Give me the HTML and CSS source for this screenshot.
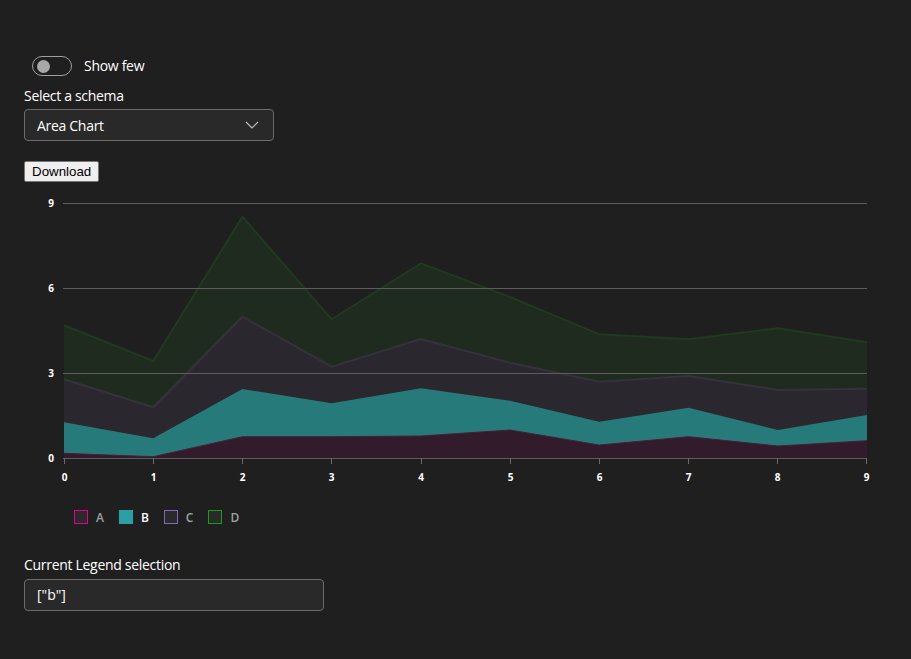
FILE: index.html
```html
<!DOCTYPE html>
<html>
<head>
<meta charset="utf-8">
<link rel="stylesheet" href="styles.css">
</head>
<body>
<div class="page">
  <div class="toggle-row">
    <span class="toggle"><span class="knob"></span></span>
    <span class="toggle-label">Show few</span>
  </div>
  <div class="field-label">Select a schema</div>
  <div class="dropdown">
    <span>Area Chart</span>
    <svg class="chev" width="14" height="8" viewBox="0 0 14 8"><path d="M1 1 L7 7 L13 1" fill="none" stroke="#bdbdbd" stroke-width="1.2"/></svg>
  </div>
  <button class="download">Download</button>
  <svg class="chart" width="870" height="292" viewBox="0 0 870 292">
    <g transform="translate(-24,-192)">
      <polygon class="d" points="64,458 64,325.3 153.2,361 242.4,216.7 331.7,319.3 420.9,263.3 510.1,297 599.3,334.3 688.6,339.3 777.8,328.3 867,342.3 867,458"/>
      <polyline class="d-line" points="64,325.3 153.2,361 242.4,216.7 331.7,319.3 420.9,263.3 510.1,297 599.3,334.3 688.6,339.3 777.8,328.3 867,342.3"/>
      <polygon class="c" points="64,458 64,379.3 153.2,407.3 242.4,316.7 331.7,366.7 420.9,339 510.1,362.7 599.3,381.7 688.6,376 777.8,390 867,388.7 867,458"/>
      <polyline class="c-line" points="64,379.3 153.2,407.3 242.4,316.7 331.7,366.7 420.9,339 510.1,362.7 599.3,381.7 688.6,376 777.8,390 867,388.7"/>
      <polygon class="b" points="64,458 64,422.3 153.2,438.3 242.4,389 331.7,403.3 420.9,388.3 510.1,400.7 599.3,421.7 688.6,407.7 777.8,430 867,415 867,458"/>
      <polygon class="a" points="64,458 64,453.3 153.2,456.7 242.4,436.7 331.7,436.7 420.9,436 510.1,430 599.3,445 688.6,436.7 777.8,446 867,440.7 867,458"/>
      <polyline class="a-line" points="64,453.3 153.2,456.7 242.4,436.7 331.7,436.7 420.9,436 510.1,430 599.3,445 688.6,436.7 777.8,446 867,440.7"/>
      <g class="grid">
        <line x1="63" y1="203.5" x2="867" y2="203.5"/>
        <line x1="63" y1="288.5" x2="867" y2="288.5"/>
        <line x1="63" y1="373.5" x2="867" y2="373.5"/>
        <line x1="63" y1="458.5" x2="867" y2="458.5"/>
      </g>
      <g class="ticks">
        <line x1="64.5" y1="458" x2="64.5" y2="464"/>
        <line x1="153.5" y1="458" x2="153.5" y2="464"/>
        <line x1="242.5" y1="458" x2="242.5" y2="464"/>
        <line x1="331.5" y1="458" x2="331.5" y2="464"/>
        <line x1="421.5" y1="458" x2="421.5" y2="464"/>
        <line x1="510.5" y1="458" x2="510.5" y2="464"/>
        <line x1="599.5" y1="458" x2="599.5" y2="464"/>
        <line x1="688.5" y1="458" x2="688.5" y2="464"/>
        <line x1="777.5" y1="458" x2="777.5" y2="464"/>
        <line x1="866.5" y1="458" x2="866.5" y2="464"/>
      </g>
      <g class="ylab">
        <text x="54" y="207">9</text>
        <text x="54" y="292">6</text>
        <text x="54" y="377">3</text>
        <text x="54" y="462">0</text>
      </g>
      <g class="xlab">
        <text x="64.5" y="481">0</text>
        <text x="153.5" y="481">1</text>
        <text x="242.5" y="481">2</text>
        <text x="331.5" y="481">3</text>
        <text x="421" y="481">4</text>
        <text x="510.5" y="481">5</text>
        <text x="599.5" y="481">6</text>
        <text x="688.5" y="481">7</text>
        <text x="777.5" y="481">8</text>
        <text x="866.5" y="481">9</text>
      </g>
    </g>
  </svg>
  <div class="legend">
    <div class="item"><span class="sw sw-a"></span><span class="lt">A</span></div>
    <div class="item"><span class="sw sw-b"></span><span class="lt on">B</span></div>
    <div class="item"><span class="sw sw-c"></span><span class="lt">C</span></div>
    <div class="item"><span class="sw sw-d"></span><span class="lt">D</span></div>
  </div>
  <div class="field-label sel-label">Current Legend selection</div>
  <div class="textbox">["b"]</div>
</div>
</body>
</html>
```

FILE: styles.css
```css
html, body {
  margin: 0;
  padding: 0;
  background: #1f1f1f;
}
body {
  font-family: "Open Sans", "Noto Sans", sans-serif;
  color: #ffffff;
  font-size: 14px;
}
.page {
  padding: 56px 24px 0 24px;
}
.toggle-row {
  display: flex;
  align-items: center;
  gap: 12px;
  margin-left: 8px;
  height: 20px;
}
.toggle {
  box-sizing: border-box;
  width: 40px;
  height: 20px;
  border: 1px solid #a0a0a0;
  border-radius: 10px;
  display: flex;
  align-items: center;
  padding-left: 4px;
}
.knob {
  width: 13px;
  height: 13px;
  border-radius: 50%;
  background: #a8a8a8;
}
.toggle-label {
  font-size: 14px;
  letter-spacing: -0.3px;
  position: relative;
  top: -1px;
}
.field-label {
  margin-top: 10px;
  height: 20px;
  line-height: 20px;
  font-size: 14px;
  letter-spacing: -0.3px;
}
.dropdown {
  box-sizing: border-box;
  margin-top: 3px;
  width: 250px;
  height: 32px;
  background: #292929;
  border: 1px solid #6b6b6b;
  border-radius: 4px;
  display: flex;
  align-items: center;
  justify-content: space-between;
  padding: 0 14px 0 12px;
  font-size: 14px;
  letter-spacing: -0.3px;
}
.chev {
  display: block;
}
.download {
  display: block;
  margin-top: 20px;
  height: 21px;
  padding: 0 7px;
  font-family: "Liberation Sans", Arial, sans-serif;
  font-size: 13.33px;
  color: #000;
  background: #efefef;
  border: 1px solid #767676;
  border-radius: 2px;
}
.chart {
  display: block;
  margin-top: 10px;
}
.d { fill: #1f2b1f; }
.d-line { fill: none; stroke: #1f3a1f; stroke-width: 2; }
.c { fill: #2a272f; }
.c-line { fill: none; stroke: #35323b; stroke-width: 2; }
.b { fill: #277a7a; }
.a { fill: #321b2a; }
.a-line { fill: none; stroke: #4a1d3a; stroke-width: 1; }
.grid line { stroke: #5c5c5c; stroke-width: 1; }
.ticks line { stroke: #6a6a6a; stroke-width: 1; }
.ylab text {
  fill: #ffffff;
  font-family: "Open Sans", sans-serif;
  font-size: 10px;
  font-weight: 700;
  text-anchor: end;
}
.xlab text {
  fill: #ffffff;
  font-family: "Open Sans", sans-serif;
  font-size: 10px;
  font-weight: 700;
  text-anchor: middle;
}
.legend {
  display: flex;
  margin-top: 25px;
  margin-left: 50px;
  gap: 15px;
  height: 16px;
  align-items: center;
}
.item {
  display: flex;
  align-items: center;
  gap: 8px;
}
.sw {
  box-sizing: border-box;
  width: 14px;
  height: 14px;
  border: 1px solid;
  background: #2a2a2a;
}
.sw-a { border-color: #e3008c; }
.sw-b { border-color: #2aa0a4; background: #2aa0a4; }
.sw-c { border-color: #8764b8; }
.sw-d { border-color: #13a10e; }
.lt {
  font-size: 12px;
  font-weight: 600;
  color: #a0a0a0;
}
.lt.on { color: #ffffff; }
.sel-label {
  margin-top: 30px;
}
.textbox {
  box-sizing: border-box;
  margin-top: 4px;
  width: 300px;
  height: 32px;
  background: #292929;
  border: 1px solid #6b6b6b;
  border-radius: 4px;
  padding: 0 12px;
  line-height: 30px;
  font-size: 14px;
}
```
